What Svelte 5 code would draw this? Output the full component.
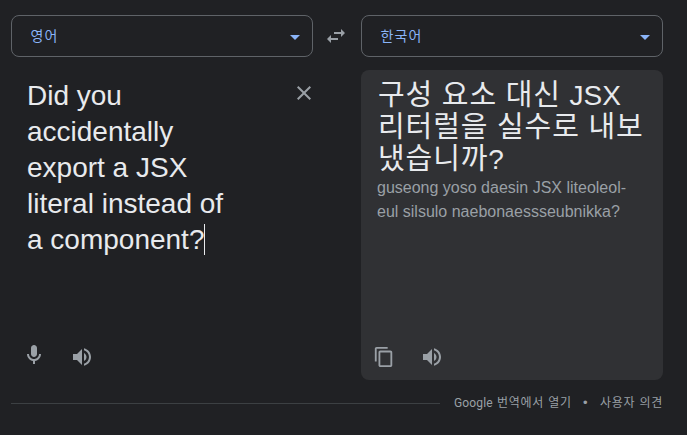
<script>
  const source = ['Did you', 'accidentally', 'export a JSX', 'literal instead of', 'a component?'];
  const romanized = ['guseong yoso daesin JSX liteoleol-', 'eul silsulo naebonaessseubnikka?'];
  const icons = {
    drop: 'M7 10l5 5 5-5z',
    swap: 'M6.99 11L3 15l3.99 4v-3H14v-2H6.99v-3zM21 9l-3.99-4v3H10v2h7.01v3L21 9z',
    close: 'M19 6.41L17.59 5 12 10.59 6.41 5 5 6.41 10.59 12 5 17.59 6.41 19 12 13.41 17.59 19 19 17.59 13.41 12z',
    mic: 'M12 14c1.66 0 3-1.34 3-3V5c0-1.66-1.34-3-3-3S9 3.34 9 5v6c0 1.66 1.34 3 3 3zm5-3c0 2.76-2.24 5-5 5s-5-2.24-5-5H5c0 3.53 2.61 6.43 6 6.92V21h2v-3.08c3.39-.49 6-3.39 6-6.92h-2z',
    volume: 'M3 9v6h4l5 5V4L7 9H3zm13.5 3c0-1.77-1.02-3.29-2.5-4.03v8.05c1.48-.73 2.5-2.25 2.5-4.02zM14 3.23v2.06c2.89.86 5 3.54 5 6.71s-2.11 5.85-5 6.71v2.06c4.01-.91 7-4.49 7-8.77s-2.99-7.86-7-8.77z',
    copy: 'M16 1H4c-1.100 0-2 .9-2 2v14h2V3h12V1zm3 4H8c-1.100 0-2 .9-2 2v14c0 1.100.9 2 2 2h11c1.100 0 2-.9 2-2V7c0-1.100-.9-2-2-2zm0 16H8V7h11v14z'
  };
</script>

{#snippet icon(name, size = 24)}
  <svg width={size} height={size} viewBox="0 0 24 24" aria-hidden="true"><path d={icons[name]} /></svg>
{/snippet}

<main>
  <header>
    <button class="select"><span>영어</span>{@render icon('drop')}</button>
    <button class="swap" aria-label="언어 전환">{@render icon('swap')}</button>
    <button class="select"><span>한국어</span>{@render icon('drop')}</button>
  </header>

  <div class="panels">
    <section class="source">
      <div class="entry">
        <div class="text">
          {#each source as line, i}
            <div>{line}{#if i === source.length - 1}<span class="caret"></span>{/if}</div>
          {/each}
        </div>
        <button aria-label="지우기">{@render icon('close')}</button>
      </div>
      <div class="tools">
        <button class="mic" aria-label="음성 입력">{@render icon('mic')}</button>
        <button aria-label="듣기">{@render icon('volume')}</button>
      </div>
    </section>

    <section class="target">
      <div class="translation">
        <div>구성 요소 대신 <span class="latin">JSX</span></div>
        <div>리터럴을 실수로 내보</div>
        <div>냈습니까<span class="latin">?</span></div>
      </div>
      <div class="roman">
        {#each romanized as line}<div>{line}</div>{/each}
      </div>
      <div class="tools">
        <button class="copy" aria-label="복사">{@render icon('copy', 22)}</button>
        <button aria-label="듣기">{@render icon('volume')}</button>
      </div>
    </section>
  </div>

  <footer>
    <hr />
    <span class="open"><span class="brand">Google</span> 번역에서 열기</span>
    <span class="dot">•</span>
    <span class="feedback">사용자 의견</span>
  </footer>
</main>

<style>
  :global(body) { background: #202124; }
  main {
    box-sizing: border-box;
    width: 687px;
    height: 435px;
    padding: 15px 24px 0 11px;
    overflow: hidden;
    background: #202124;
    color: #e8eaed;
    font-family: "Liberation Sans", "Noto Sans CJK KR", sans-serif;
  }
  svg { display: block; fill: #9aa0a6; flex: none; }
  button {
    display: block;
    margin: 0;
    padding: 0;
    border: 0;
    background: none;
    font: inherit;
    color: inherit;
  }
  header { display: flex; height: 42px; }
  .select {
    box-sizing: border-box;
    display: flex;
    align-items: center;
    justify-content: space-between;
    width: 302px;
    height: 42px;
    padding: 0 5px 0 18.5px;
    border: 1px solid #5f6368;
    border-radius: 8px;
    color: #8ab4f8;
    font-size: 14px;
    letter-spacing: 1.1px;
  }
  .select span { margin-top: -2px; }
  .select svg { fill: #8ab4f8; margin-top: 2px; }
  .swap { width: 48px; padding-left: 11px; }
  .panels { display: flex; justify-content: space-between; margin-top: 13px; }
  section {
    box-sizing: border-box;
    display: flex;
    flex-direction: column;
    width: 302px;
    height: 310px;
    border-radius: 8px;
    white-space: nowrap;
  }
  .source { padding: 8px 0 0 16px; }
  .target { padding: 6px 0 0 16px; background: #303134; }
  .entry { display: flex; }
  .text { flex: none; width: 265px; font-size: 28px; line-height: 36px; }
  .entry button { height: 24px; margin-top: 3px; }
  .entry svg { margin-right: -3px; }
  .caret {
    display: inline-block;
    width: 1px;
    height: 31px;
    margin: 0 -1px 0 0;
    vertical-align: -6px;
    background: #e8eaed;
  }
  .translation {
    height: 100px;
    padding-left: 1px;
    font-family: "Noto Sans CJK KR", sans-serif;
    font-size: 29px;
    line-height: 32px;
    letter-spacing: 0.9px;
    word-spacing: 1.3px;
  }
  .translation div { height: 32px; }
  .latin { font-family: "Liberation Sans", sans-serif; font-size: 28px; line-height: 1px; letter-spacing: 0; }
  .roman { font-size: 16px; line-height: 24px; color: #9aa0a6; }
  .tools { display: flex; align-items: flex-start; gap: 24px; height: 24px; margin: auto 0 11px -5px; }
  .mic { margin-top: -2px; }
  .target .tools { margin-left: -4px; }
  .copy { width: 23px; padding-top: 1px; }
  footer {
    display: flex;
    align-items: center;
    height: 24px;
    margin-top: 11px;
    color: #9aa0a6;
    font: 12px/24px Roboto, "Noto Sans CJK KR", sans-serif;
    letter-spacing: 0.7px;
    word-spacing: 0.6px;
    white-space: nowrap;
  }
  .brand { letter-spacing: 0.15px; }
  hr { width: 429px; height: 1px; margin: 0 14px 0 0; border: 0; background: #3c4043; flex: none; }
  .open { flex: none; width: 129px; }
  .dot { flex: none; width: 17px; font-family: "Liberation Sans", sans-serif; font-size: 13px; }
</style>
